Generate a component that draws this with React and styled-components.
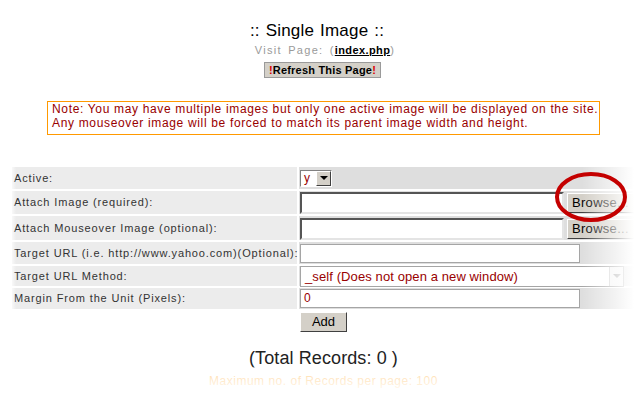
import React from 'react';
import styled, { createGlobalStyle } from 'styled-components';

const GlobalStyle = createGlobalStyle`
  html, body {
    margin: 0;
    padding: 0;
    background: #fff;
    font-family: "Liberation Sans", Arial, sans-serif;
  }
`;

const Page = styled.div`
  position: relative;
  width: 634px;
  height: 395px;
  overflow: hidden;
  background: #fff;
`;

const Header = styled.div`
  display: flex;
  flex-direction: column;
  align-items: center;
  padding-top: 21px;
`;

const Title = styled.div`
  font-size: 17px;
  line-height: 20px;
  letter-spacing: 0.2px;
  word-spacing: 1px;
  color: #000;
`;

const VisitLine = styled.div`
  margin-top: 2px;
  font-size: 11px;
  line-height: 14px;
  letter-spacing: 1.3px;
  word-spacing: 2px;
  color: #9a9a9a;
  padding-left: 16px;

  a {
    color: #000;
    font-weight: bold;
    text-decoration: underline;
    letter-spacing: 0.4px;
  }
`;

const RefreshButton = styled.div`
  margin: 5px 0 0 11px;
  width: 115px;
  height: 14px;
  background: #d4d0c8;
  border: 1px solid #9a9a9a;
  font-size: 11px;
  font-weight: bold;
  line-height: 14px;
  text-align: center;
  color: #000;
  letter-spacing: 0.2px;

  span {
    color: #dd0000;
  }
`;

const NoteBox = styled.div`
  margin: 23px 0 0 47px;
  width: 547px;
  height: 31px;
  border: 1px solid #ff9900;
  padding: 1px 0 0 4px;
  font-size: 12px;
  line-height: 13.5px;
  letter-spacing: 0.66px;
  color: #990000;
  white-space: nowrap;
`;

const Table = styled.div`
  position: relative;
  margin: 32px 0 0 12px;
  display: grid;
  grid-template-columns: 285px 340px;
  row-gap: 2px;
  column-gap: 2px;
  background: #fff;
`;

const Label = styled.div`
  height: ${p => p.h}px;
  background: #ececec;
  display: flex;
  align-items: center;
  padding-left: 2px;
  padding-bottom: 1px;
  box-sizing: border-box;
  font-size: 11px;
  letter-spacing: 0.86px;
  color: #333;
  white-space: nowrap;
`;

const Value = styled.div`
  height: ${p => p.h}px;
  background: #dedede;
  display: flex;
  align-items: ${p => p.top ? 'flex-start' : 'center'};
  gap: 3px;
  padding-left: 1px;
  box-sizing: border-box;
`;

const SmallSelect = styled.div`
  display: flex;
  width: 32px;
  height: 17px;
  box-sizing: border-box;
  border: 1px solid;
  border-color: #808080 #fff #fff #808080;
  background: #fff;
`;

const SelectText = styled.div`
  flex: 1;
  font-size: 12px;
  line-height: 14px;
  color: #990000;
  padding-left: 3px;
`;

const ArrowBtn = styled.div`
  width: 15px;
  box-sizing: border-box;
  background: #d4d0c8;
  border: 1px solid;
  border-color: #fff #404040 #404040 #fff;
  display: flex;
  align-items: center;
  justify-content: center;

  &::after {
    content: '';
    border-left: 4px solid transparent;
    border-right: 4px solid transparent;
    border-top: 4px solid #000;
  }
`;

const FileBox = styled.div`
  width: 264px;
  height: 22px;
  box-sizing: border-box;
  background: #fff;
  border: 2px solid;
  border-color: #555 #e4e4e4 #e4e4e4 #555;
`;

const BrowseButton = styled.div`
  width: 72px;
  height: 20px;
  box-sizing: border-box;
  background: #d4d0c8;
  border: 1px solid;
  border-color: #fff #404040 #404040 #fff;
  font-size: 13px;
  line-height: 18px;
  padding-left: 4px;
  color: #000;
  letter-spacing: 0.3px;
`;

const TextBox = styled.div`
  width: ${p => p.w}px;
  height: ${p => p.ht}px;
  box-sizing: border-box;
  background: #fff;
  border: 1px solid #a5a5a5;
  font-size: 12px;
  line-height: ${p => p.ht - 2}px;
  padding-left: 3px;
  color: #990000;
`;

const WideSelect = styled.div`
  display: flex;
  width: 324px;
  height: 21px;
  box-sizing: border-box;
  background: #fff;
  border: 1px solid #a5a5a5;
`;

const WideSelectText = styled.div`
  flex: 1;
  font-size: 13px;
  line-height: 19px;
  padding-left: 4px;
  color: #990000;
  letter-spacing: 0.1px;
`;

const FlatArrow = styled.div`
  width: 13px;
  background: #f4f4f4;
  border-left: 1px solid #d0d0d0;
  display: flex;
  align-items: center;
  justify-content: center;

  &::after {
    content: '';
    border-left: 4px solid transparent;
    border-right: 4px solid transparent;
    border-top: 4px solid #a0a0a0;
  }
`;

const Footer = styled.div`
  display: flex;
  flex-direction: column;
  align-items: center;
  padding-left: 13px;
`;

const AddButton = styled.div`
  margin-top: 3px;
  width: 47px;
  height: 20px;
  box-sizing: border-box;
  background: #d4d0c8;
  border: 1px solid;
  border-color: #fff #404040 #404040 #fff;
  font-size: 13px;
  line-height: 18px;
  text-align: center;
  color: #000;
`;

const Total = styled.div`
  margin-top: 16px;
  font-size: 18px;
  line-height: 20px;
  color: #222;
  letter-spacing: 0.1px;
`;

const MaxLine = styled.div`
  margin-top: 6px;
  font-size: 12px;
  line-height: 14px;
  color: #ff9900;
  letter-spacing: 0.5px;
`;

const RightFade = styled.div`
  position: absolute;
  top: 150px;
  right: 0;
  width: 52px;
  bottom: 0;
  background: linear-gradient(to right, rgba(255,255,255,0), rgba(255,255,255,0.55) 55%, #fff);
  pointer-events: none;
`;

const LeftFade = styled.div`
  position: absolute;
  top: 160px;
  left: 10px;
  width: 6px;
  height: 160px;
  background: linear-gradient(to right, #fff, rgba(255,255,255,0));
  pointer-events: none;
`;

const BottomFade = styled.div`
  position: absolute;
  left: 0;
  right: 0;
  bottom: 0;
  height: 28px;
  background: linear-gradient(to bottom, rgba(255,255,255,0.6), #fff);
  pointer-events: none;
`;

const Circle = styled.svg`
  position: absolute;
  left: 552px;
  top: 170px;
`;

export default function App() {
  return (
    <Page>
      <GlobalStyle />
      <Header>
        <Title>:: Single Image ::</Title>
        <VisitLine>Visit Page: (<a>index.php</a>)</VisitLine>
        <RefreshButton><span>!</span>Refresh This Page<span>!</span></RefreshButton>
      </Header>

      <NoteBox>
        Note: You may have multiple images but only one active image will be displayed on the site.<br />
        Any mouseover image will be forced to match its parent image width and height.
      </NoteBox>

      <Table>
        <Label h={22}>Active:</Label>
        <Value h={22}>
          <SmallSelect>
            <SelectText>y</SelectText>
            <ArrowBtn />
          </SmallSelect>
        </Value>

        <Label h={23}>Attach Image (required):</Label>
        <Value h={23}>
          <FileBox />
          <BrowseButton>Browse...</BrowseButton>
        </Value>

        <Label h={24}>Attach Mouseover Image (optional):</Label>
        <Value h={24} top>
          <FileBox style={{ marginTop: 2 }} />
          <BrowseButton style={{ marginTop: 3 }}>Browse...</BrowseButton>
        </Value>

        <Label h={22}>Target URL (i.e. http://www.yahoo.com)(Optional):</Label>
        <Value h={22}>
          <TextBox w={280} ht={19} />
        </Value>

        <Label h={20}>Target URL Method:</Label>
        <Value h={20}>
          <WideSelect>
            <WideSelectText>_self (Does not open a new window)</WideSelectText>
            <FlatArrow />
          </WideSelect>
        </Value>

        <Label h={21}>Margin From the Unit (Pixels):</Label>
        <Value h={21}>
          <TextBox w={280} ht={19}>0</TextBox>
        </Value>
      </Table>

      <Footer>
        <AddButton>Add</AddButton>
        <Total>(Total Records: 0 )</Total>
        <MaxLine>Maximum no. of Records per page: 100</MaxLine>
      </Footer>

      <LeftFade />
      <RightFade />
      <BottomFade />

      <Circle width="80" height="56" viewBox="0 0 80 56">
        <ellipse cx="39" cy="27" rx="34" ry="23" fill="none" stroke="#c40000" strokeWidth="4" />
      </Circle>
    </Page>
  );
}
